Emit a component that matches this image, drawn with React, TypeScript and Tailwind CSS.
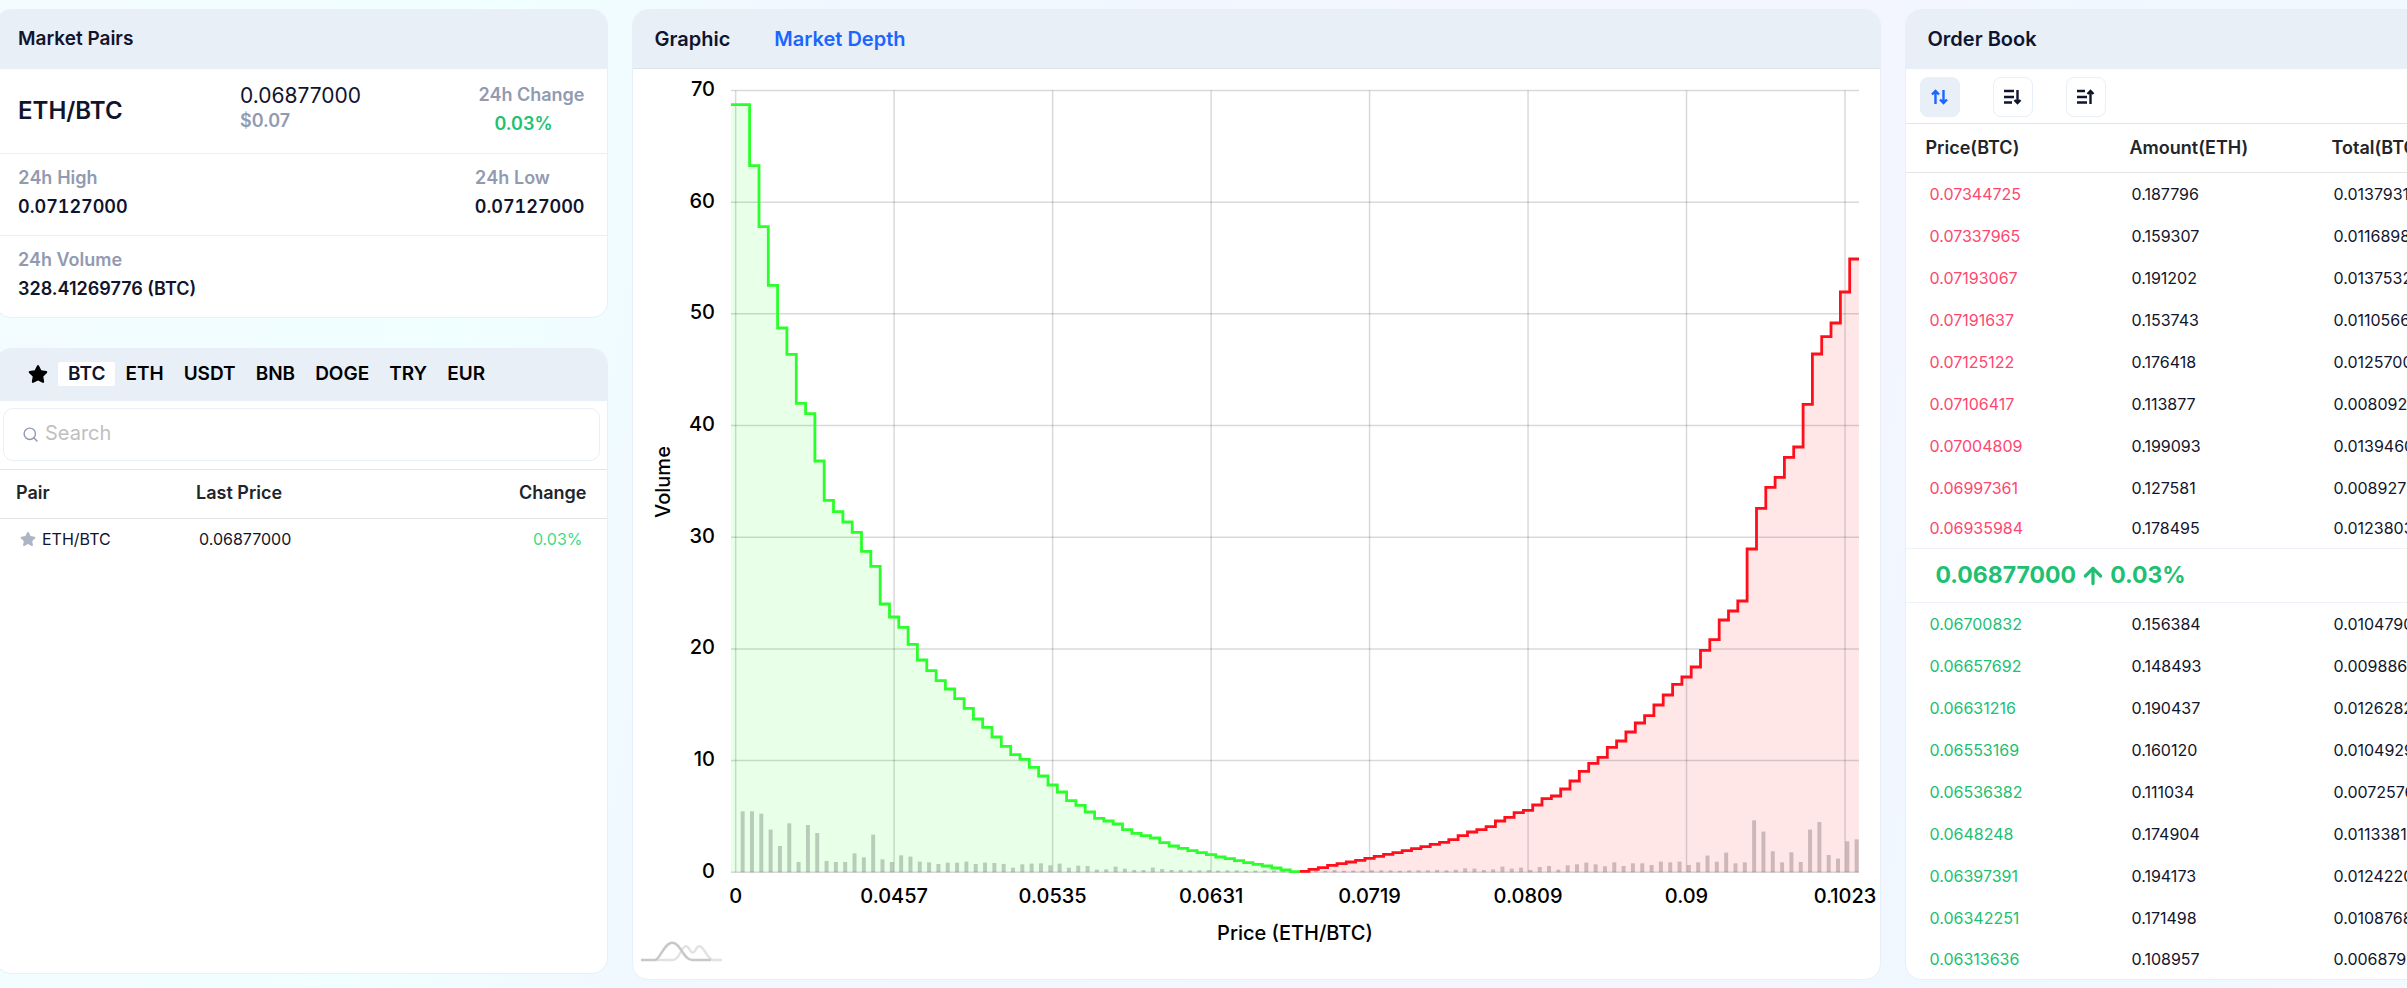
import { useState } from "react";
import clsx from "clsx";
import { FaStar } from "react-icons/fa";
import { FiArrowUp, FiSearch } from "react-icons/fi";

const TABS = ["BTC", "ETH", "USDT", "BNB", "DOGE", "TRY", "EUR"];

const ASKS = [
  ["0.07344725", "0.187796"],
  ["0.07337965", "0.159307"],
  ["0.07193067", "0.191202"],
  ["0.07191637", "0.153743"],
  ["0.07125122", "0.176418"],
  ["0.07106417", "0.113877"],
  ["0.07004809", "0.199093"],
  ["0.06997361", "0.127581"],
  ["0.06935984", "0.178495"],
];

const BIDS = [
  ["0.06700832", "0.156384"],
  ["0.06657692", "0.148493"],
  ["0.06631216", "0.190437"],
  ["0.06553169", "0.160120"],
  ["0.06536382", "0.111034"],
  ["0.0648248", "0.174904"],
  ["0.06397391", "0.194173"],
  ["0.06342251", "0.171498"],
  ["0.06313636", "0.108957"],
];

// cumulative depth per price step, as y positions on the plot
const BID_Y = [
  104.7, 104.7, 165.7, 226.7, 285.3, 328, 354.3, 403.3, 413.7, 461, 500.3, 511.7, 522, 532.3,
  551.3, 566.3, 604, 617, 627.3, 644.3, 660, 670.7, 680.7, 689, 698.7, 708.3, 719, 727.3, 737,
  746.3, 754.7, 759.3, 767.3, 776, 785, 792, 800.7, 805.3, 812, 818.3, 821, 824, 829.7, 833.3,
  835.7, 838, 842.7, 846, 848.3, 850.7, 852.7, 854.7, 857, 858.7, 860.7, 862.7, 864.3, 866, 868,
  870, 871.7,
];
const ASK_Y = [
  871.3, 869.3, 867.7, 865.3, 863.7, 862, 860.3, 858.3, 856.3, 854.3, 852.7, 850.7, 848.7, 846.7,
  844.3, 842.3, 839.7, 835.7, 832, 829.7, 826.7, 821, 817.3, 812.7, 810.3, 805, 798.7, 796, 789,
  781, 771.3, 763.3, 757.3, 747.3, 741, 732, 723, 715.7, 705, 695, 684.3, 677, 667, 650.3, 639.7,
  620, 611, 601, 549, 508.3, 487.3, 477.3, 457.3, 447, 404.3, 354, 336.7, 323, 292, 259,
];

const LEFT = 731;
const RIGHT = 1859;
const TOP = 90.5;
const BASE = 872.3;
const STEP = (RIGHT - LEFT) / (BID_Y.length + ASK_Y.length);
const PRICE_LABELS = ["0", "0.0457", "0.0535", "0.0631", "0.0719", "0.0809", "0.09", "0.1023"];
const VOLUME_LABELS = [0, 10, 20, 30, 40, 50, 60, 70];

function stepPath(ys: number[], from: number) {
  return ys
    .map((y, i) => {
      const x = LEFT + (from + i) * STEP;
      return `${i === 0 ? "M" : "L"}${x.toFixed(1)} ${y}H${(x + STEP).toFixed(1)}`;
    })
    .join("");
}

function DepthChart() {
  const middle = LEFT + BID_Y.length * STEP;
  const bidLine = stepPath(BID_Y, 0);
  const askLine = stepPath(ASK_Y, BID_Y.length);

  return (
    <svg
      viewBox="633 69 1247 908"
      className="block w-full text-xl font-medium"
      role="img"
      aria-label="Market depth"
    >
      <path d={`${bidLine}V${BASE}H${LEFT}Z`} fill="#1aff1a" fillOpacity="0.1" />
      <path d={`${askLine}V${BASE}H${middle}Z`} fill="#ff0f1f" fillOpacity="0.1" />
      <g stroke="#000" strokeOpacity="0.15" strokeWidth="1.5">
        {VOLUME_LABELS.map((v) => {
          const y = BASE - (v / 70) * (BASE - TOP);
          return <line key={v} x1={LEFT} x2={RIGHT} y1={y} y2={y} />;
        })}
        {PRICE_LABELS.map((p, i) => {
          const x = LEFT + (i * 17 + 0.5) * STEP;
          return <line key={p} x1={x} x2={x} y1={TOP} y2={BASE} />;
        })}
      </g>
      <g fill="#000" fillOpacity="0.2">
        {BID_Y.map((y, i) => {
          const h = (BID_Y[i + 1] ?? BASE) - y;
          return <rect key={i} x={LEFT + (i + 0.25) * STEP - 2} y={BASE - h} width="4" height={h} />;
        })}
        {ASK_Y.map((y, i) => {
          const h = (ASK_Y[i - 1] ?? BASE) - y;
          const x = middle + (i + 0.75) * STEP - 2;
          return <rect key={i} x={x} y={BASE - h} width="4" height={h} />;
        })}
      </g>
      <path d={bidLine} fill="none" stroke="#2bff2b" strokeWidth="2.8" />
      <path d={askLine} fill="none" stroke="#ff0f1b" strokeWidth="2.8" />
      <g fill="#000">
        {VOLUME_LABELS.map((v) => (
          <text key={v} x="715" y={BASE + 5.5 - (v / 70) * (BASE - TOP)} textAnchor="end">
            {v}
          </text>
        ))}
        {PRICE_LABELS.map((p, i) => (
          <text key={p} x={LEFT + (i * 17 + 0.5) * STEP} y="903" textAnchor="middle">
            {p}
          </text>
        ))}
        <text x="1295" y="940" textAnchor="middle">
          Price (ETH/BTC)
        </text>
        <text transform="translate(670 482) rotate(-90)" textAnchor="middle">
          Volume
        </text>
      </g>
      <g fill="none" strokeWidth="2.4">
        <path
          d="M655 960H673C680 960 681 946.300 686 946.300C689.500 946.300 690 952.700 692.700 952.700C695.300 952.700 696 946.300 699.300 946.300C704 946.300 708 960 713 960H722"
          stroke="#e2e2e2"
        />
        <path
          d="M641 960H655C660 960 664 942.700 672.300 942.700C681 942.700 683 960 692 960H711"
          stroke="#c8c8c8"
        />
      </g>
    </svg>
  );
}

function Card({ className, children }: { className?: string; children: React.ReactNode }) {
  return (
    <section
      className={clsx("overflow-hidden rounded-2xl border border-[#e8eff7] bg-white", className)}
    >
      {children}
    </section>
  );
}

function Stat({ label, value }: { label: string; value: string }) {
  return (
    <div>
      <div className="text-[#929ab1]">{label}</div>
      <div>{value}</div>
    </div>
  );
}

function MarketPairs() {
  return (
    <Card>
      <h2 className="flex h-[59px] items-center bg-[#e8eff7] px-[22px] text-[19px] font-semibold">
        Market Pairs
      </h2>
      <div className="flex h-[85px] justify-between border-b border-[#e8eff7] px-[22px] text-lg/[29px] font-semibold">
        <div className="flex items-center text-2xl">ETH/BTC</div>
        <div className="pt-3.5">
          <div className="text-[21px]/[26px] font-normal">0.06877000</div>
          <div className="leading-6 text-[#929ab1]">$0.07</div>
        </div>
        <div className="pt-[11px]">
          <div className="text-[#929ab1]">24h Change</div>
          <div className="px-4 text-[#1ec271]">0.03%</div>
        </div>
      </div>
      <div className="flex h-[82px] justify-between border-b border-[#e8eff7] px-[22px] pt-[9px] text-lg/[29px] font-semibold tabular-nums">
        <Stat label="24h High" value="0.07127000" />
        <Stat label="24h Low" value="0.07127000" />
      </div>
      <div className="h-[81px] px-[22px] pt-[9px] text-lg/[29px] font-semibold">
        <Stat label="24h Volume" value="328.41269776 (BTC)" />
      </div>
    </Card>
  );
}

function PairList() {
  const [tab, setTab] = useState("BTC");
  const [query, setQuery] = useState("");

  return (
    <Card className="flex-1">
      <nav className="flex h-[52px] items-center bg-[#e8eff7] pb-0.5 pl-8 text-[19px]/6 font-semibold text-black">
        <button type="button" aria-label="Favorites" className="mr-2.5">
          <FaStar size={20} />
        </button>
        {TABS.map((t) => (
          <button
            key={t}
            type="button"
            onClick={() => setTab(t)}
            className={clsx("rounded-xs px-2.5", t === tab && "bg-white text-[#11142d]")}
          >
            {t}
          </button>
        ))}
      </nav>
      <label className="mx-[7px] mt-[7px] mb-2 flex h-[53px] items-center gap-1.5 rounded-[10px] border border-[#e8eff7] pl-[18px]">
        <FiSearch size={17} className="text-[#929ab1]" />
        <input
          type="text"
          aria-label="Search"
          value={query}
          onChange={(e) => setQuery(e.target.value)}
          placeholder="Search"
          className="flex-1 pb-1 text-xl outline-none placeholder:text-[#bfbfbf]"
        />
      </label>
      <table className="w-full table-fixed text-left">
        <thead>
          <tr className="h-[49px] border-y border-[#e2e4e7] text-lg text-[#212529]">
            <th className="w-[181px] pb-0.5 pl-5 font-semibold">Pair</th>
            <th className="pb-0.5 pl-[19px] font-semibold">Last Price</th>
            <th className="pr-5 pb-0.5 text-right font-semibold">Change</th>
          </tr>
        </thead>
        <tbody>
          {"ETH/BTC".includes(query.toUpperCase()) && (
            <tr className="h-10 text-base">
              <td className="pl-6">
                <span className="flex items-center gap-1.5">
                  <FaStar size={16} className="text-[#adb5c4]" />
                  ETH/BTC
                </span>
              </td>
              <td className="pl-[22px]">0.06877000</td>
              <td className="pr-6 text-right text-[#3ddc84]">0.03%</td>
            </tr>
          )}
        </tbody>
      </table>
    </Card>
  );
}

function DepthPanel() {
  const [view, setView] = useState("Market Depth");

  return (
    <Card className="col-span-2">
      <div className="flex h-[59px] items-center gap-11 border-b border-[#dfe3ea] bg-[#e8eff7] px-[22px] text-xl font-semibold">
        {["Graphic", "Market Depth"].map((v) => (
          <button
            key={v}
            type="button"
            onClick={() => setView(v)}
            className={v === view ? "text-[#1a66ff]" : undefined}
          >
            {v}
          </button>
        ))}
      </div>
      <DepthChart />
    </Card>
  );
}

const BOOK_VIEWS = [
  { label: "Both", path: "M4.500 15V2M1 5.500L4.500 2L8 5.500M12.500 1V14M9 10.500L12.500 14L16 10.500" },
  { label: "Bids", path: "M0 2H10M0 8H10M0 13.500H8M13.500 1V14M10.500 11L13.500 14L16.500 11" },
  { label: "Asks", path: "M0 2H8M0 8H10M0 13.500H10M13.500 15V2M10.500 5L13.500 2L16.500 5" },
];

function Rows({ rows, price }: { rows: string[][]; price: string }) {
  return rows.map(([p, amount], i) => (
    <tr key={p} className={i === rows.length - 1 ? "h-10" : "h-[42px]"}>
      <td className={clsx("pl-6", price)}>{p}</td>
      <td className="pl-6">{amount}</td>
      <td className="pl-6">{(Number(p) * Number(amount)).toFixed(8)}</td>
    </tr>
  ));
}

function OrderBook() {
  const [view, setView] = useState("Both");

  return (
    <Card>
      <h2 className="flex h-[59px] items-center bg-[#e8eff7] px-[22px] pb-0.5 text-xl font-semibold">
        Order Book
      </h2>
      <div className="flex gap-[33px] px-3.5 pt-2 pb-1.5">
        {BOOK_VIEWS.map(({ label, path }) => (
          <button
            key={label}
            type="button"
            aria-label={label}
            onClick={() => setView(label)}
            className={clsx(
              "flex size-10 items-center justify-center rounded-lg border border-[#e8eff7]",
              label === view && "bg-[#e8eff7] text-[#1a66ff]",
            )}
          >
            <svg width="18" height="16" viewBox="0 0 18 16" fill="none" stroke="currentColor" strokeWidth="2.4">
              <path d={path} />
            </svg>
          </button>
        ))}
      </div>
      <table className="w-full table-fixed text-left text-base">
        <thead>
          <tr className="h-[49px] border-y border-[#e2e4e7] text-lg text-[#212529]">
            <th className="w-[202px] pl-5 font-semibold">Price(BTC)</th>
            <th className="w-[202px] pl-[22px] font-semibold">Amount(ETH)</th>
            <th className="pl-[22px] font-semibold">Total(BTC)</th>
          </tr>
        </thead>
        <tbody>
          <Rows rows={ASKS} price="text-[#ff4670]" />
          <tr className="h-[54px] border-y border-[#eef2fa] text-[23px] font-bold text-[#20bf71]">
            <td colSpan={3} className="pl-[30px]">
              <span className="flex items-center">
                0.06877000
                <FiArrowUp size={26} strokeWidth={3} className="mx-1" />
                0.03%
              </span>
            </td>
          </tr>
          <Rows rows={BIDS} price="text-[#20bf71]" />
        </tbody>
      </table>
    </Card>
  );
}

export default function App() {
  return (
    <main className="min-h-screen overflow-hidden bg-[linear-gradient(100deg,#f3fcff_0%,#f0ffff_20%,#f0f8ff_32%,#f3f6ff_55%,#f3f6ff_76%,#eff8ff_82%,#f2f9ff_100%)] font-[Inter,sans-serif] text-[#11142d]">
      <div className="-ml-[5px] grid w-[calc(100%+115px)] grid-cols-4 gap-6 pt-[9px] pb-[9px]">
        <div className="flex flex-col gap-[30px] pb-1.5">
          <MarketPairs />
          <PairList />
        </div>
        <DepthPanel />
        <OrderBook />
      </div>
    </main>
  );
}
